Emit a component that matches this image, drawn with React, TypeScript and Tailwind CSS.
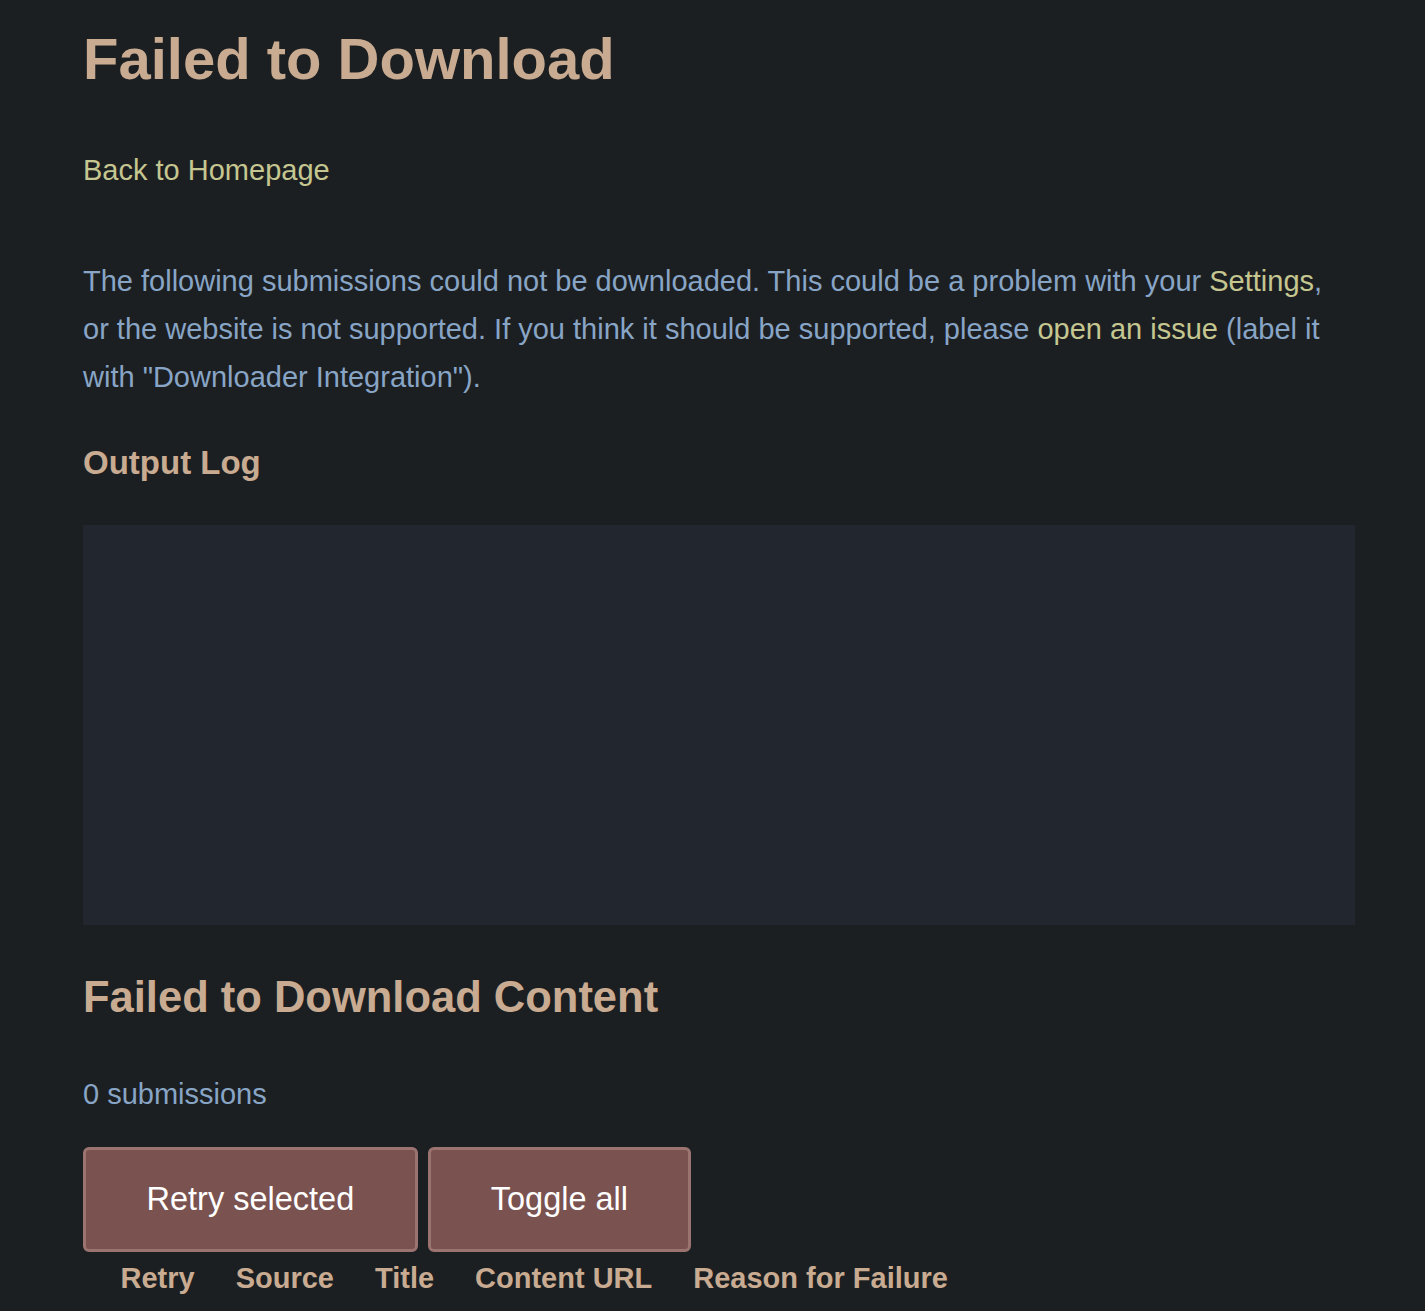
export default function App() {
  const cols = ["Retry", "Source", "Title", "Content URL", "Reason for Failure"];
  return (
    <div className="min-h-[1311px] bg-[#1c1f22] pl-[83px] pr-[70px] pt-[25px] font-['Liberation_Sans',Arial,sans-serif]">
      <h1 className="text-[58px] font-bold leading-[68px] text-[#c8ab91]">Failed to Download</h1>

      <a href="#" className="mt-[53px] block text-[29px] leading-[48px] text-[#c5c690]">Back to Homepage</a>

      <p className="mt-[63px] text-[29px] leading-[48px] text-[#88a5c6]">
        The following submissions could not be downloaded. This could be a problem with your{" "}
        <a href="#" className="text-[#c5c690]">Settings</a>, or the website is not supported. If you think it should be
        supported, please <a href="#" className="text-[#c5c690]">open an issue</a> (label it with "Downloader
        Integration").
      </p>

      <h3 className="mt-[42px] text-[33px] font-bold leading-[40px] text-[#c8ab91]">Output Log</h3>

      <div className="mt-[42px] h-[400px] bg-[#22262e]" />

      <h2 className="mt-[46px] text-[43.5px] font-bold leading-[52px] text-[#c8ab91]">Failed to Download Content</h2>

      <p className="mt-[47px] text-[29px] leading-[48px] text-[#88a5c6]">0 submissions</p>

      <div className="mt-[29px] flex gap-[10px]">
        <button className="h-[105px] rounded-[6px] border-[3px] border-[#9b7371] bg-[#7a524f] px-[60.5px] text-[32.5px] text-white">
          Retry selected
        </button>
        <button className="h-[105px] rounded-[6px] border-[3px] border-[#9b7371] bg-[#7a524f] px-[60px] text-[32.5px] text-white">
          Toggle all
        </button>
      </div>

      <table className="ml-[17px] mt-[2px] border-collapse">
        <thead>
          <tr>
            {cols.map((c) => (
              <th key={c} className="px-[20.5px] text-left text-[29px] font-bold leading-[48px] text-[#c8ab91]">
                {c}
              </th>
            ))}
          </tr>
        </thead>
      </table>
    </div>
  );
}
